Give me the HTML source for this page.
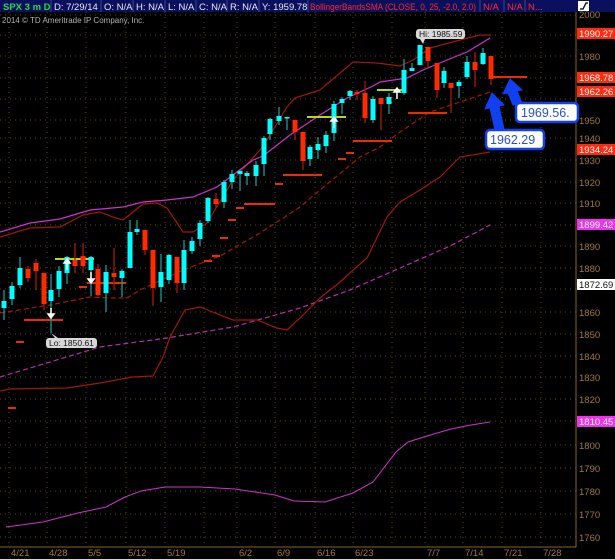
<!DOCTYPE html>
<html><head><meta charset="utf-8"><style>
html,body{margin:0;padding:0;background:#000;width:615px;height:559px;overflow:hidden}
svg{display:block;font-family:"Liberation Sans",sans-serif}
.cw{stroke:#1a9a9a;stroke-width:1.3}.rw{stroke:#a81808;stroke-width:1.3}
.cb{fill:#00ffff}.rb{fill:#ff2a00}
</style></head><body>
<svg width="615" height="559" viewBox="0 0 615 559" xmlns="http://www.w3.org/2000/svg">
<rect width="615" height="559" fill="#000"/>
<g stroke="#5a4518" stroke-width="1" stroke-dasharray="1,4">
<line x1="0" y1="15" x2="576" y2="15"/><line x1="0" y1="35" x2="576" y2="35"/><line x1="0" y1="56" x2="576" y2="56"/><line x1="0" y1="78" x2="576" y2="78"/><line x1="0" y1="99" x2="576" y2="99"/><line x1="0" y1="120" x2="576" y2="120"/><line x1="0" y1="138" x2="576" y2="138"/><line x1="0" y1="160" x2="576" y2="160"/><line x1="0" y1="182" x2="576" y2="182"/><line x1="0" y1="203" x2="576" y2="203"/><line x1="0" y1="225" x2="576" y2="225"/><line x1="0" y1="246" x2="576" y2="246"/><line x1="0" y1="268" x2="576" y2="268"/><line x1="0" y1="289" x2="576" y2="289"/><line x1="0" y1="312" x2="576" y2="312"/><line x1="0" y1="334" x2="576" y2="334"/><line x1="0" y1="356" x2="576" y2="356"/><line x1="0" y1="377" x2="576" y2="377"/><line x1="0" y1="399" x2="576" y2="399"/><line x1="0" y1="421" x2="576" y2="421"/><line x1="0" y1="445" x2="576" y2="445"/><line x1="0" y1="468" x2="576" y2="468"/><line x1="0" y1="491" x2="576" y2="491"/><line x1="0" y1="514" x2="576" y2="514"/><line x1="0" y1="537" x2="576" y2="537"/>
<line x1="9" y1="12" x2="9" y2="547"/><line x1="47" y1="12" x2="47" y2="547"/><line x1="86" y1="12" x2="86" y2="547"/><line x1="126" y1="12" x2="126" y2="547"/><line x1="165" y1="12" x2="165" y2="547"/><line x1="204" y1="12" x2="204" y2="547"/><line x1="237" y1="12" x2="237" y2="547"/><line x1="275" y1="12" x2="275" y2="547"/><line x1="315" y1="12" x2="315" y2="547"/><line x1="353" y1="12" x2="353" y2="547"/><line x1="392" y1="12" x2="392" y2="547"/><line x1="425" y1="12" x2="425" y2="547"/><line x1="463" y1="12" x2="463" y2="547"/><line x1="502" y1="12" x2="502" y2="547"/><line x1="541" y1="12" x2="541" y2="547"/>
</g>
<rect x="0" y="0" width="615" height="12" fill="#0a0f5e"/>
<g stroke="#3a4a8a" stroke-width="1"><line x1="51" y1="0" x2="51" y2="12"/><line x1="101" y1="0" x2="101" y2="12"/><line x1="133" y1="0" x2="133" y2="12"/><line x1="165" y1="0" x2="165" y2="12"/><line x1="196" y1="0" x2="196" y2="12"/><line x1="227" y1="0" x2="227" y2="12"/><line x1="259" y1="0" x2="259" y2="12"/><line x1="308" y1="0" x2="308" y2="12"/><line x1="480" y1="0" x2="480" y2="12"/><line x1="504" y1="0" x2="504" y2="12"/><line x1="525" y1="0" x2="525" y2="12"/></g>
<g font-size="9.5" fill="#e8e8f0">
<text x="3" y="10" fill="#22dd44" font-weight="bold">SPX 3 m D</text>
<text x="54" y="10">D: 7/29/14</text><text x="104" y="10">O: N/A</text><text x="136" y="10">H: N/A</text><text x="168" y="10">L: N/A</text><text x="199" y="10">C: N/A</text><text x="230" y="10">R: N/A</text><text x="262" y="10">Y: 1959.78</text>
<g fill="#ff2a2a"><text x="310" y="10" textLength="166" lengthAdjust="spacingAndGlyphs">BollingerBandsSMA (CLOSE, 0, 25, -2.0, 2.0)</text><text x="483" y="10">N/A</text><text x="507" y="10">N/A</text><text x="528" y="10">N...</text></g>
</g>
<rect x="578" y="1" width="11" height="10" fill="#fff"/><path d="M580 9 L583 9 L586 3 L588 3" stroke="#000" stroke-width="1.3" fill="none"/>
<text x="2" y="23" font-size="8" fill="#b0b0b0">2014 © TD Ameritrade IP Company, Inc.</text>
<polyline fill="none" stroke="#cc33cc" stroke-width="1" points="6,527 43,522 78,513 106,507 125,497 141,491 165,487 200,487 235,489 275,495 294,501 325,502 353,493 373,482 396,452 408,442 427,436 451,429 471,425 490,422"/>
<polyline fill="none" stroke="#b030b0" stroke-width="1.2" stroke-dasharray="5,3" points="0,377 100,347 167,338 233,327 300,308 350,290 400,268 450,246 490,225"/>
<polyline fill="none" stroke="#a01808" stroke-width="1.2" stroke-dasharray="5,3" points="0,313 50,305 90,297 110,298 127,298 140,290 183,270 220,256 260,233 280,220 300,207 320,190 360,157 380,147 400,132 430,112 490,92"/>
<polyline fill="none" stroke="#a01808" stroke-width="1.2" points="0,237 30,228 60,227 83,215 100,212 113,217 123,220 143,204 157,203 167,208 183,232 193,232 207,223 233,180 260,150 267,140 287,107 295,98 320,90 340,73 353,62 377,63 400,66 413,60 430,48 460,40 480,35 490,35"/>
<polyline fill="none" stroke="#a01808" stroke-width="1.2" points="0,391 10,389 67,388 100,383 133,377 153,376 163,357 170,337 185,310 200,307 233,320 257,320 277,328 287,330 300,318 320,298 340,282 360,264 367,258 387,217 400,202 420,190 440,177 460,157 490,152"/>
<polyline fill="none" stroke="#cc33cc" stroke-width="1.2" points="0,232 30,223 60,219 90,210 123,207 143,202 167,200 193,197 217,187 233,175 253,160 263,156 290,135 320,115 347,98 373,86 380,82 407,78 423,70 447,60 467,52 490,38"/>
<g stroke="#ee2a00" stroke-width="2">
<line x1="8" y1="408" x2="16" y2="408"/><line x1="16" y1="342" x2="24" y2="342"/><line x1="24" y1="320" x2="63" y2="320"/><line x1="79" y1="287" x2="87" y2="287"/><line x1="87" y1="283" x2="126" y2="283"/><line x1="204" y1="261" x2="212" y2="261"/><line x1="212" y1="256" x2="220" y2="256"/><line x1="220" y1="238" x2="228" y2="238"/><line x1="228" y1="220" x2="236" y2="220"/><line x1="236" y1="208" x2="244" y2="208"/><line x1="244" y1="204" x2="275" y2="204"/><line x1="275" y1="184" x2="283" y2="184"/><line x1="283" y1="175" x2="322" y2="175"/><line x1="338" y1="159" x2="346" y2="159"/><line x1="346" y1="153" x2="354" y2="153"/><line x1="353" y1="141" x2="392" y2="141"/><line x1="408" y1="113" x2="447" y2="113"/><line x1="491" y1="77" x2="527" y2="77"/>
</g>
<g stroke="#b8d810" stroke-width="2"><line x1="55" y1="259" x2="94" y2="259"/><line x1="307" y1="117" x2="346" y2="117"/><line x1="377" y1="90" x2="404" y2="90"/></g>
<!-- wicks -->
<g class="cw">
<line x1="4" y1="290" x2="4" y2="320"/><line x1="12" y1="282" x2="12" y2="305"/><line x1="20" y1="257" x2="20" y2="288"/><line x1="51" y1="274" x2="51" y2="333"/><line x1="59" y1="266" x2="59" y2="297"/><line x1="67" y1="256" x2="67" y2="284"/><line x1="91" y1="256" x2="91" y2="296"/><line x1="106" y1="265" x2="106" y2="312"/><line x1="122" y1="269" x2="122" y2="297"/><line x1="130" y1="220" x2="130" y2="268"/><line x1="137" y1="220" x2="137" y2="235"/><line x1="161" y1="254" x2="161" y2="302"/><line x1="169" y1="254" x2="169" y2="284"/><line x1="184" y1="240" x2="184" y2="290"/><line x1="192" y1="237" x2="192" y2="254"/><line x1="200" y1="220" x2="200" y2="246"/><line x1="208" y1="197" x2="208" y2="223"/><line x1="224" y1="180" x2="224" y2="208"/><line x1="232" y1="170" x2="232" y2="189"/><line x1="240" y1="169" x2="240" y2="191"/><line x1="247" y1="171" x2="247" y2="185"/><line x1="256" y1="161" x2="256" y2="186"/><line x1="264" y1="136" x2="264" y2="176"/><line x1="270" y1="118" x2="270" y2="140"/><line x1="279" y1="107" x2="279" y2="125"/><line x1="287" y1="117" x2="287" y2="130"/><line x1="310" y1="145" x2="310" y2="166"/><line x1="318" y1="137" x2="318" y2="159"/><line x1="326" y1="131" x2="326" y2="153"/><line x1="334" y1="101" x2="334" y2="141"/><line x1="342" y1="97" x2="342" y2="114"/><line x1="350" y1="90" x2="350" y2="100"/><line x1="373" y1="96" x2="373" y2="123"/><line x1="389" y1="93" x2="389" y2="114"/><line x1="404" y1="59" x2="404" y2="95"/><line x1="412" y1="63" x2="412" y2="71"/><line x1="444" y1="67" x2="444" y2="88"/><line x1="459" y1="80" x2="459" y2="98"/><line x1="467" y1="56" x2="467" y2="79"/><line x1="483" y1="48" x2="483" y2="65"/>
</g>
<g class="rw">
<line x1="28" y1="266" x2="28" y2="282"/><line x1="36" y1="259" x2="36" y2="290"/><line x1="44" y1="273" x2="44" y2="310"/><line x1="75" y1="243" x2="75" y2="273"/><line x1="83" y1="243" x2="83" y2="273"/><line x1="98" y1="264" x2="98" y2="296"/><line x1="114" y1="248" x2="114" y2="290"/><line x1="145" y1="230" x2="145" y2="255"/><line x1="153" y1="250" x2="153" y2="306"/><line x1="177" y1="257" x2="177" y2="293"/><line x1="216" y1="193" x2="216" y2="208"/><line x1="295" y1="120" x2="295" y2="140"/><line x1="303" y1="132" x2="303" y2="170"/><line x1="357" y1="90" x2="357" y2="100"/><line x1="365" y1="81" x2="365" y2="123"/><line x1="381" y1="98" x2="381" y2="130"/><line x1="428" y1="47" x2="428" y2="67"/><line x1="437" y1="63" x2="437" y2="98"/><line x1="451" y1="83" x2="451" y2="113"/><line x1="475" y1="52" x2="475" y2="87"/><line x1="491" y1="56" x2="491" y2="85"/>
</g>
<g class="cb">
<rect x="1.5" y="301" width="5" height="7"/><rect x="9.5" y="286" width="5" height="13"/><rect x="17.5" y="268" width="5" height="17"/><rect x="48.5" y="290" width="5" height="11"/><rect x="56.5" y="271" width="5" height="18"/><rect x="64.5" y="257" width="5" height="16"/><rect x="88.5" y="257" width="5" height="13"/><rect x="103.5" y="272" width="5" height="21"/><rect x="119.5" y="271" width="5" height="7"/><rect x="127.5" y="232" width="5" height="36"/><rect x="134.5" y="229" width="5" height="3"/><rect x="158.5" y="272" width="5" height="15"/><rect x="166.5" y="255" width="5" height="25"/><rect x="181.5" y="250" width="5" height="33"/><rect x="189.5" y="241" width="5" height="10"/><rect x="197.5" y="223" width="5" height="16"/><rect x="205.5" y="198" width="5" height="23"/><rect x="221.5" y="182" width="5" height="20"/><rect x="229.5" y="174" width="5" height="8"/><rect x="237.5" y="171" width="5" height="3"/><rect x="244.5" y="173" width="5" height="3"/><rect x="253.5" y="165" width="5" height="11"/><rect x="261.5" y="138" width="5" height="26"/><rect x="267.5" y="119" width="5" height="15"/><rect x="276.5" y="116" width="5" height="5"/><rect x="284.5" y="117" width="5" height="1.5"/><rect x="307.5" y="147" width="5" height="12"/><rect x="315.5" y="144" width="5" height="6"/><rect x="323.5" y="135" width="5" height="11"/><rect x="331.5" y="104" width="5" height="29"/><rect x="339.5" y="99" width="5" height="4"/><rect x="347.5" y="91" width="5" height="5"/><rect x="370.5" y="99" width="5" height="21"/><rect x="386.5" y="97" width="5" height="7"/><rect x="401.5" y="70" width="5" height="23"/><rect x="409.5" y="68" width="5" height="3"/><rect x="417.5" y="45" width="5" height="20"/><rect x="441.5" y="71" width="5" height="12"/><rect x="456.5" y="82" width="5" height="4"/><rect x="464.5" y="62" width="5" height="15"/><rect x="480.5" y="53" width="5" height="11"/>
</g>
<g class="rb">
<rect x="25.5" y="269" width="5" height="9"/><rect x="33.5" y="263" width="5" height="8"/><rect x="41.5" y="273" width="5" height="31"/><rect x="72.5" y="260" width="5" height="6"/><rect x="80.5" y="256" width="5" height="10"/><rect x="95.5" y="269" width="5" height="26"/><rect x="111.5" y="273" width="5" height="4"/><rect x="142.5" y="230" width="5" height="20"/><rect x="150.5" y="250" width="5" height="38"/><rect x="174.5" y="257" width="5" height="26"/><rect x="213.5" y="199" width="5" height="5"/><rect x="292.5" y="120" width="5" height="12"/><rect x="300.5" y="132" width="5" height="29"/><rect x="354.5" y="92" width="5" height="2"/><rect x="362.5" y="93" width="5" height="25"/><rect x="378.5" y="98" width="5" height="6"/><rect x="425.5" y="47" width="5" height="14"/><rect x="434.5" y="63" width="5" height="27"/><rect x="448.5" y="83" width="5" height="5"/><rect x="472.5" y="62" width="5" height="8"/><rect x="488.5" y="56" width="5" height="23"/>
</g>
<g fill="#fff" stroke="#fff" stroke-width="1.5">
<line x1="51" y1="308" x2="51" y2="316"/><path d="M48 314 L54 314 L51 318Z"/>
<line x1="67" y1="262" x2="67" y2="270"/><path d="M64 263 L70 263 L67 259Z"/>
<line x1="91" y1="272" x2="91" y2="280"/><path d="M88 279 L94 279 L91 283Z"/>
<line x1="334" y1="120" x2="334" y2="128"/><path d="M331 121 L337 121 L334 117Z"/>
<line x1="397" y1="91" x2="397" y2="99"/><path d="M394 92 L400 92 L397 88Z"/>
</g>
<path d="M420 39 L423 44 L425 39Z" fill="#d8d8d8"/>
<rect x="416" y="29" width="49" height="10" rx="3" fill="#d8d8d8"/><text x="419" y="37" font-size="8.5" fill="#111">Hi: 1985.59</text>
<path d="M51 333 L55 338 L58 338Z" fill="#d8d8d8"/>
<rect x="46" y="338" width="51" height="10" rx="3" fill="#d8d8d8"/><text x="49" y="346" font-size="8.5" fill="#111">Lo: 1850.61</text>
<line x1="576" y1="12" x2="576" y2="547" stroke="#8a6420" stroke-width="1"/>
<line x1="0" y1="547" x2="576" y2="547" stroke="#8a6420" stroke-width="1"/>
<g font-size="9.5" fill="#a07a40">
<text x="579" y="18">2000</text><text x="579" y="60">1980</text><text x="579" y="124">1950</text><text x="579" y="142">1940</text><text x="579" y="164">1930</text><text x="579" y="186">1920</text><text x="579" y="207">1910</text><text x="579" y="250">1890</text><text x="579" y="272">1880</text><text x="579" y="316">1860</text><text x="579" y="338">1850</text><text x="579" y="360">1840</text><text x="579" y="381">1830</text><text x="579" y="403">1820</text><text x="579" y="449">1800</text><text x="579" y="472">1790</text><text x="579" y="495">1780</text><text x="579" y="518">1770</text><text x="579" y="541">1760</text>
<text x="11" y="556">4/21</text><text x="49" y="556">4/28</text><text x="88" y="556">5/5</text><text x="128" y="556">5/12</text><text x="167" y="556">5/19</text><text x="239" y="556">6/2</text><text x="277" y="556">6/9</text><text x="317" y="556">6/16</text><text x="355" y="556">6/23</text><text x="427" y="556">7/7</text><text x="465" y="556">7/14</text><text x="504" y="556">7/21</text><text x="543" y="556">7/28</text>
</g>
<g font-size="9.5" fill="#fff">
<rect x="577" y="28" width="38" height="11" fill="#ff2a10"/><text x="579" y="37">1990.27</text>
<rect x="577" y="72" width="38" height="11" fill="#ff2a10"/><text x="579" y="81">1968.78</text>
<rect x="577" y="86" width="38" height="11" fill="#ff2a10"/><text x="579" y="95">1962.26</text>
<rect x="577" y="144" width="38" height="11" fill="#ff2a10"/><text x="579" y="153">1934.24</text>
<rect x="577" y="219" width="38" height="11" fill="#ee33ee"/><text x="579" y="228">1899.42</text>
<rect x="577" y="279" width="38" height="11" fill="#fff"/><text x="579" y="288" fill="#111">1872.69</text>
<rect x="577" y="416" width="38" height="11" fill="#ee33ee"/><text x="579" y="425">1810.45</text>
</g>
<g fill="#1040f0" stroke="#1040f0">
<path d="M510 79 L503 94 L508 93 L513 105 L522 103 L517 91 L522 90Z" stroke-width="1"/>
<path d="M492 93 L485 109 L490 108 L495 130 L504 129 L499 106 L504 105Z" stroke-width="1"/>
</g>
<rect x="516" y="103" width="62" height="19" rx="4" fill="#fff" stroke="#1040f0" stroke-width="2.5"/>
<text x="521" y="117" font-size="12.5" fill="#2a4fd0">1969.56.</text>
<rect x="486" y="130" width="58" height="19" rx="4" fill="#fff" stroke="#1040f0" stroke-width="2.5"/>
<text x="490" y="144" font-size="12.5" fill="#2a4fd0">1962.29</text>
</svg>
</body></html>
